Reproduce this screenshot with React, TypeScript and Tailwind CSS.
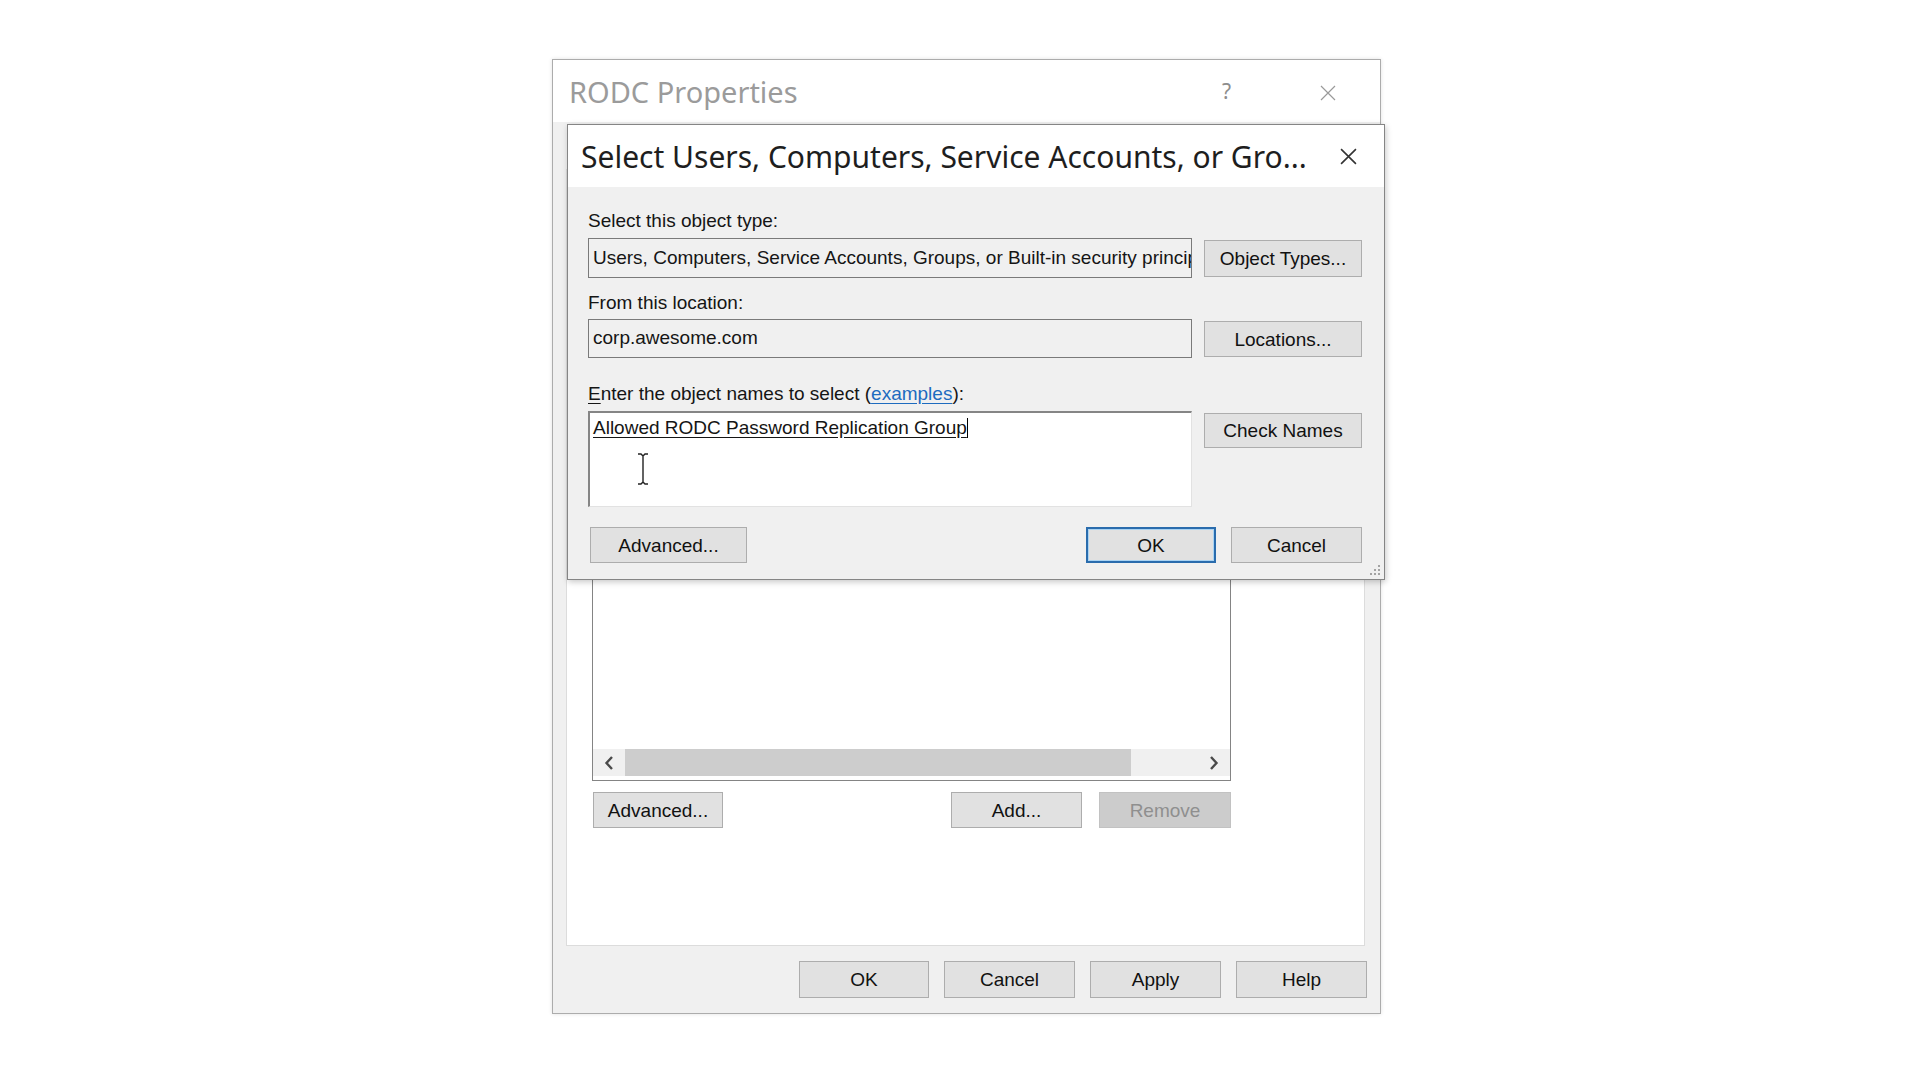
import React from 'react';

function WinButton({
  label,
  className = '',
  disabled = false,
  primary = false,
}: {
  label: string;
  className?: string;
  disabled?: boolean;
  primary?: boolean;
}) {
  const look = disabled
    ? 'bg-[#cccccc] border border-[#c2c2c2] text-[#8f8f8f]'
    : primary
    ? 'bg-[#e1e1e1] border-2 border-[#2a6cad] shadow-[inset_0_0_0_1px_#a9d3f3] text-[#111]'
    : 'bg-[#e1e1e1] border border-[#adadad] text-[#111]';
  return (
    <button className={`flex items-center justify-center leading-none ${look} ${className}`}>
      {label}
    </button>
  );
}

function ResizeGrip() {
  return (
    <svg width="12" height="12" viewBox="0 0 12 12" className="absolute right-[3px] bottom-[3px]">
      {[
        [9, 1],
        [9, 5],
        [5, 5],
        [9, 9],
        [5, 9],
        [1, 9],
      ].map(([x, y], i) => (
        <rect key={i} x={x} y={y} width="2" height="2" fill="#a3a3a3" />
      ))}
    </svg>
  );
}

function CloseGlyph({ color, size, stroke }: { color: string; size: number; stroke: number }) {
  return (
    <svg width={size} height={size} viewBox="0 0 16 16">
      <path d="M1 1 L15 15 M15 1 L1 15" stroke={color} strokeWidth={stroke} fill="none" />
    </svg>
  );
}

function IBeam() {
  return (
    <svg width="16" height="34" viewBox="0 0 16 34" className="absolute left-[45px] top-[39px]">
      <path
        d="M3 2 H6 L8 4 L10 2 H13 M8 4 V30 M3 32 H6 L8 30 L10 32 H13"
        stroke="#ffffff"
        strokeWidth="3.5"
        fill="none"
        opacity="0.9"
      />
      <path d="M3 2 H6 L8 4 L10 2 H13 M8 4 V30 M3 32 H6 L8 30 L10 32 H13" stroke="#222" strokeWidth="1.4" fill="none" />
    </svg>
  );
}

export default function App() {
  return (
    <div className="min-h-screen bg-white font-['Liberation_Sans',Arial,sans-serif] text-[19px] text-[#151515]">
      <div className="pt-[59px] pl-[552px]">
        {/* RODC Properties (background window) */}
        <div className="relative w-[829px] h-[955px] border border-[#acacac] bg-[#f0f0f0] flex flex-col shadow-[0_0_4px_rgba(0,0,0,0.12)]">
          <div className="h-[62px] bg-white flex items-start pl-[16px] pr-[44px] pt-[12px]">
            <span className="font-['Noto_Sans',sans-serif] text-[29px] leading-[40px] text-[#9b9b9b]">RODC Properties</span>
            <span className="ml-auto mt-[6px] font-['Noto_Sans',sans-serif] text-[21px] leading-[26px] text-[#8d8d8d]">?</span>
            <span className="ml-[89px] mt-[13px]">
              <CloseGlyph color="#9a9a9a" size={16} stroke={1.2} />
            </span>
          </div>

          <div className="flex-1 flex flex-col">
            {/* tab page */}
            <div className="mt-[47px] ml-[13px] w-[799px] flex-1 bg-white border border-[#dcdcdc] pl-[25px] pt-[260px]">
              <div className="w-[639px] h-[351px] border border-[#848484] bg-white flex flex-col">
                <div className="flex-1" />
                <div className="h-[27px] mb-[4px] flex bg-[#f0f0f0]">
                  <div className="w-[32px] flex items-center justify-center">
                    <svg width="10" height="16" viewBox="0 0 10 16">
                      <path d="M8 2 L2.5 8 L8 14" stroke="#4a4a4a" strokeWidth="2.4" fill="none" />
                    </svg>
                  </div>
                  <div className="w-[506px] bg-[#cdcdcd]" />
                  <div className="flex-1" />
                  <div className="w-[33px] flex items-center justify-center">
                    <svg width="10" height="16" viewBox="0 0 10 16">
                      <path d="M2 2 L7.5 8 L2 14" stroke="#4a4a4a" strokeWidth="2.4" fill="none" />
                    </svg>
                  </div>
                </div>
              </div>
              <div className="w-[639px] mt-[11px] flex items-center">
                <WinButton label="Advanced..." className="ml-px w-[130px] h-[36px]" />
                <WinButton label="Add..." className="ml-auto w-[131px] h-[36px]" />
                <WinButton label="Remove" disabled className="ml-[17px] w-[132px] h-[36px]" />
              </div>
            </div>

            <div className="h-[37px] mt-[15px] mb-[15px] flex justify-end pr-[13px] gap-[15px]">
              <WinButton label="OK" className="w-[130px] h-[37px]" />
              <WinButton label="Cancel" className="w-[131px] h-[37px]" />
              <WinButton label="Apply" className="w-[131px] h-[37px]" />
              <WinButton label="Help" className="w-[131px] h-[37px]" />
            </div>
          </div>

          {/* Select Users... dialog on top */}
          <div className="absolute left-[14px] top-[64px] w-[818px] h-[456px] border border-[#858585] bg-[#f0f0f0] flex flex-col shadow-[1px_2px_6px_rgba(0,0,0,0.22)]">
            <div className="h-[62px] bg-white flex items-start pl-[13px] pt-[12px]">
              <span className="font-['Noto_Sans',sans-serif] text-[30px] leading-[40px] text-[#1e1e1e] whitespace-nowrap">
                Select Users, Computers, Service Accounts, or Gro...
              </span>
              <span className="ml-auto mr-[27px] mt-[11px]">
                <CloseGlyph color="#333" size={17} stroke={1.5} />
              </span>
            </div>

            <div className="flex-1 pl-[20px] pr-[21px] pt-[23px] pb-[16px] grid grid-cols-[604px_158px] gap-x-[12px] content-start">
              <div className="col-span-2 leading-[22px]">Select this object type:</div>
              <div className="mt-[6px] h-[40px] border border-[#7a7a7a] flex items-center pl-[4px] overflow-hidden whitespace-nowrap">
                Users, Computers, Service Accounts, Groups, or Built-in security princip
              </div>
              <WinButton label="Object Types..." className="mt-[8px] h-[37px] w-full" />

              <div className="col-span-2 mt-[14px] leading-[22px]">From this location:</div>
              <div className="mt-[5px] h-[39px] border border-[#7a7a7a] flex items-center pl-[4px] overflow-hidden whitespace-nowrap">
                corp.awesome.com
              </div>
              <WinButton label="Locations..." className="mt-[7px] h-[36px] w-full" />

              <div className="col-span-2 mt-[25px] leading-[22px]">
                <span className="underline underline-offset-[3px]">E</span>nter the object names to select (
                <span className="text-[#1d6bbf] underline underline-offset-[3px]">examples</span>):
              </div>
              <div className="relative mt-[6px] h-[96px] bg-white border-t-2 border-l-2 border-[#858585] border-r border-b border-r-[#e2e2e2] border-b-[#e2e2e2] pl-[3px] pt-[4px] leading-[22px]">
                <span className="underline underline-offset-[3px]">Allowed RODC Password Replication Group</span>
                <span className="inline-block w-px h-[20px] bg-black align-[-4px]" />
                <IBeam />
              </div>
              <WinButton label="Check Names" className="mt-[8px] h-[35px] w-full self-start" />

              <div className="col-span-2 mt-[20px] flex items-center">
                <WinButton label="Advanced..." className="ml-[2px] w-[157px] h-[36px]" />
                <WinButton label="OK" primary className="ml-auto w-[130px] h-[36px]" />
                <WinButton label="Cancel" className="ml-[15px] w-[131px] h-[36px]" />
              </div>
            </div>
            <ResizeGrip />
          </div>
        </div>
      </div>
    </div>
  );
}
